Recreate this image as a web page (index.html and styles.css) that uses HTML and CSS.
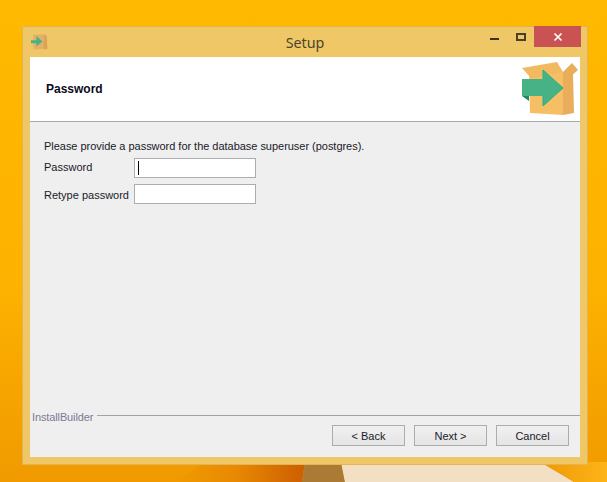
FILE: index.html
```html
<!DOCTYPE html>
<html lang="en">
<head>
<meta charset="utf-8">
<title>Setup</title>
<link rel="stylesheet" href="styles.css">
</head>
<body>
<div class="desktop">
  <svg class="wallpaper" width="607" height="482" viewBox="0 0 607 482" aria-hidden="true">
    <defs>
      <linearGradient id="sky" x1="0" y1="0" x2="0" y2="1">
        <stop offset="0" stop-color="#ffb900"/>
        <stop offset="0.6" stop-color="#fdb100"/>
        <stop offset="1" stop-color="#f09a00"/>
      </linearGradient>
      <linearGradient id="dark" x1="0" y1="0" x2="1" y2="0">
        <stop offset="0" stop-color="#f09a00"/>
        <stop offset="0.45" stop-color="#e98a02"/>
        <stop offset="1" stop-color="#cc5e02"/>
      </linearGradient>
      <linearGradient id="band" x1="0" y1="0" x2="1" y2="0">
        <stop offset="0" stop-color="#f09a06"/>
        <stop offset="1" stop-color="#fdb418"/>
      </linearGradient>
    </defs>
    <rect width="607" height="482" fill="url(#sky)"/>
    <polygon points="175,482 302,482 305,462 205,462" fill="url(#dark)"/>
    <polygon points="305,462 341,462 345,482 302,482" fill="#ab7a35"/>
    <polygon points="341,462 540,462 574,482 345,482" fill="#f3dfc3"/>
    <polygon points="545,462 607,462 607,482 574,482" fill="url(#band)"/>
  </svg>
  <section class="window">
    <header class="titlebar">
      <svg class="app-icon" width="17" height="17" viewBox="0 0 56 56" aria-hidden="true">
        <polygon points="7,6 48,4 54,52 8,54" fill="#e3b066"/>
        <polygon points="42,8 52,8 54,52 42,54" fill="#d9a458"/>
        <polygon points="0,24 18,24 18,10 38,28 18,44 18,34 0,34" fill="#48b287"/>
      </svg>
      <h1 class="title">Setup</h1>
      <div class="controls">
        <span class="min"></span>
        <span class="max"></span>
        <span class="close">
          <svg width="10" height="10" viewBox="0 0 10 10" aria-hidden="true"><path d="M1.5 1.5L8.5 8.5M8.5 1.5L1.5 8.5" stroke="#fff" stroke-width="1.7"/></svg>
        </span>
      </div>
    </header>
    <div class="client">
      <div class="banner">
        <h2 class="banner-title">Password</h2>
        <svg class="banner-icon" width="56" height="56" viewBox="0 0 56 56" aria-hidden="true">
          <polygon points="7,11 8,51 41,53 41,10" fill="#f6bf66"/>
          <polygon points="41,10 51,12 52,51 41,53" fill="#e8ae5b"/>
          <polygon points="0,6 35,0 41,10 9,16" fill="#f1b960"/>
          <polygon points="41,10 50,1 56,8 48,15" fill="#e8ae5b"/>
          <polygon points="0,17 21,17 21,8 41,26 21,44 21,34 7,34 0,34" fill="#48b287"/>
          <polygon points="0,34 7,34 7,39" fill="#1f8a68"/>
          <polyline points="21,17 21,8 41,26 21,44 21,34" fill="none" stroke="#1fb38f" stroke-width="1"/>
        </svg>
      </div>
      <div class="page">
        <p class="intro">Please provide a password for the database superuser (postgres).</p>
        <div class="form">
          <label class="lbl lbl-first">Password</label>
          <div class="input"><span class="caret"></span></div>
          <label class="lbl lbl-second">Retype password</label>
          <div class="input"></div>
        </div>
      </div>
      <div class="footer">
        <div class="brand-row">
          <span class="brand">InstallBuilder</span>
          <span class="rule"></span>
        </div>
        <div class="buttons">
          <button class="btn" type="button">&lt; Back</button>
          <button class="btn" type="button">Next &gt;</button>
          <button class="btn" type="button">Cancel</button>
        </div>
      </div>
    </div>
  </section>
</div>
</body>
</html>
```
FILE: styles.css
```css
* { box-sizing: border-box; }
html, body { margin: 0; padding: 0; }
body {
  width: 607px;
  height: 482px;
  overflow: hidden;
  font-family: "Liberation Sans", Arial, sans-serif;
  font-size: 11px;
  color: #1a1a2a;
}
.desktop { position: relative; width: 607px; height: 482px; }
.wallpaper { position: absolute; left: 0; top: 0; display: block; }
.window {
  position: absolute;
  left: 22px;
  top: 26px;
  width: 566px;
  height: 439px;
  background: #efc766;
  border: 1px solid #e2b452;
  display: flex;
  flex-direction: column;
  padding: 0 7px 7px;
}
.titlebar {
  height: 30px;
  flex: none;
  display: grid;
  grid-template-columns: 1fr auto 1fr;
  align-items: start;
}
.app-icon { margin: 6px 0 0 1px; }
.title {
  margin: 7px 0 0;
  font-family: "Noto Sans", sans-serif;
  font-weight: 400;
  font-size: 14.3px;
  line-height: 18px;
  color: #4b4430;
}
.controls { display: flex; align-items: flex-start; justify-self: end; margin-right: -1px; }
.min { width: 9px; height: 2px; background: #3b3320; margin: 11px 17px 0 0; }
.max { width: 10px; height: 8px; border: 2px solid #4a4028; margin: 6px 8px 0 0; }
.close {
  width: 47px;
  height: 21px;
  margin-top: -1px;
  background: #c95353;
  display: flex;
  align-items: center;
  justify-content: center;
}
.client {
  flex: 1;
  display: flex;
  flex-direction: column;
  background: #efefef;
  min-height: 0;
}
.banner {
  height: 65px;
  flex: none;
  background: #fff;
  border-bottom: 1px solid #a9a9a9;
  display: flex;
  align-items: center;
  justify-content: space-between;
  padding: 0 2px 0 16px;
}
.banner-title { margin: 0; font-size: 12px; font-weight: 700; color: #0b0b1c; }
.banner-icon { margin-top: 2px; }
.page { flex: 1; padding: 16px 14px 0; }
.intro { margin: 0 0 4px; line-height: 16px; letter-spacing: -0.03px; }
.form {
  display: grid;
  grid-template-columns: 90px 122px;
  grid-auto-rows: 20px;
  row-gap: 6px;
  align-items: center;
}
.lbl { line-height: 16px; white-space: nowrap; }
.lbl-first { margin-top: -2px; }
.lbl-second { margin-top: 2px; }
.input {
  height: 20px;
  background: #fff;
  border: 1px solid #abadb3;
  padding: 2px 3px;
}
.caret { display: block; width: 1px; height: 14px; background: #000; }
.footer { flex: none; height: 42px; }
.brand-row { display: flex; align-items: flex-start; height: 10px; }
.brand { margin-left: 2px; margin-top: -6px; line-height: 16px; letter-spacing: -0.12px; color: #7e7a94; white-space: nowrap; }
.rule { flex: 1; height: 1px; background: #a3a3a3; margin-left: 4px; }
.buttons { display: flex; justify-content: flex-end; gap: 9px; padding: 0 11px 0 0; }
.btn {
  width: 73px;
  height: 21px;
  padding: 0;
  font: inherit;
  line-height: 16px;
  color: #1a1a2a;
  background: linear-gradient(#f0f0f0, #e5e5e5);
  border: 1px solid #acacac;
}
```
